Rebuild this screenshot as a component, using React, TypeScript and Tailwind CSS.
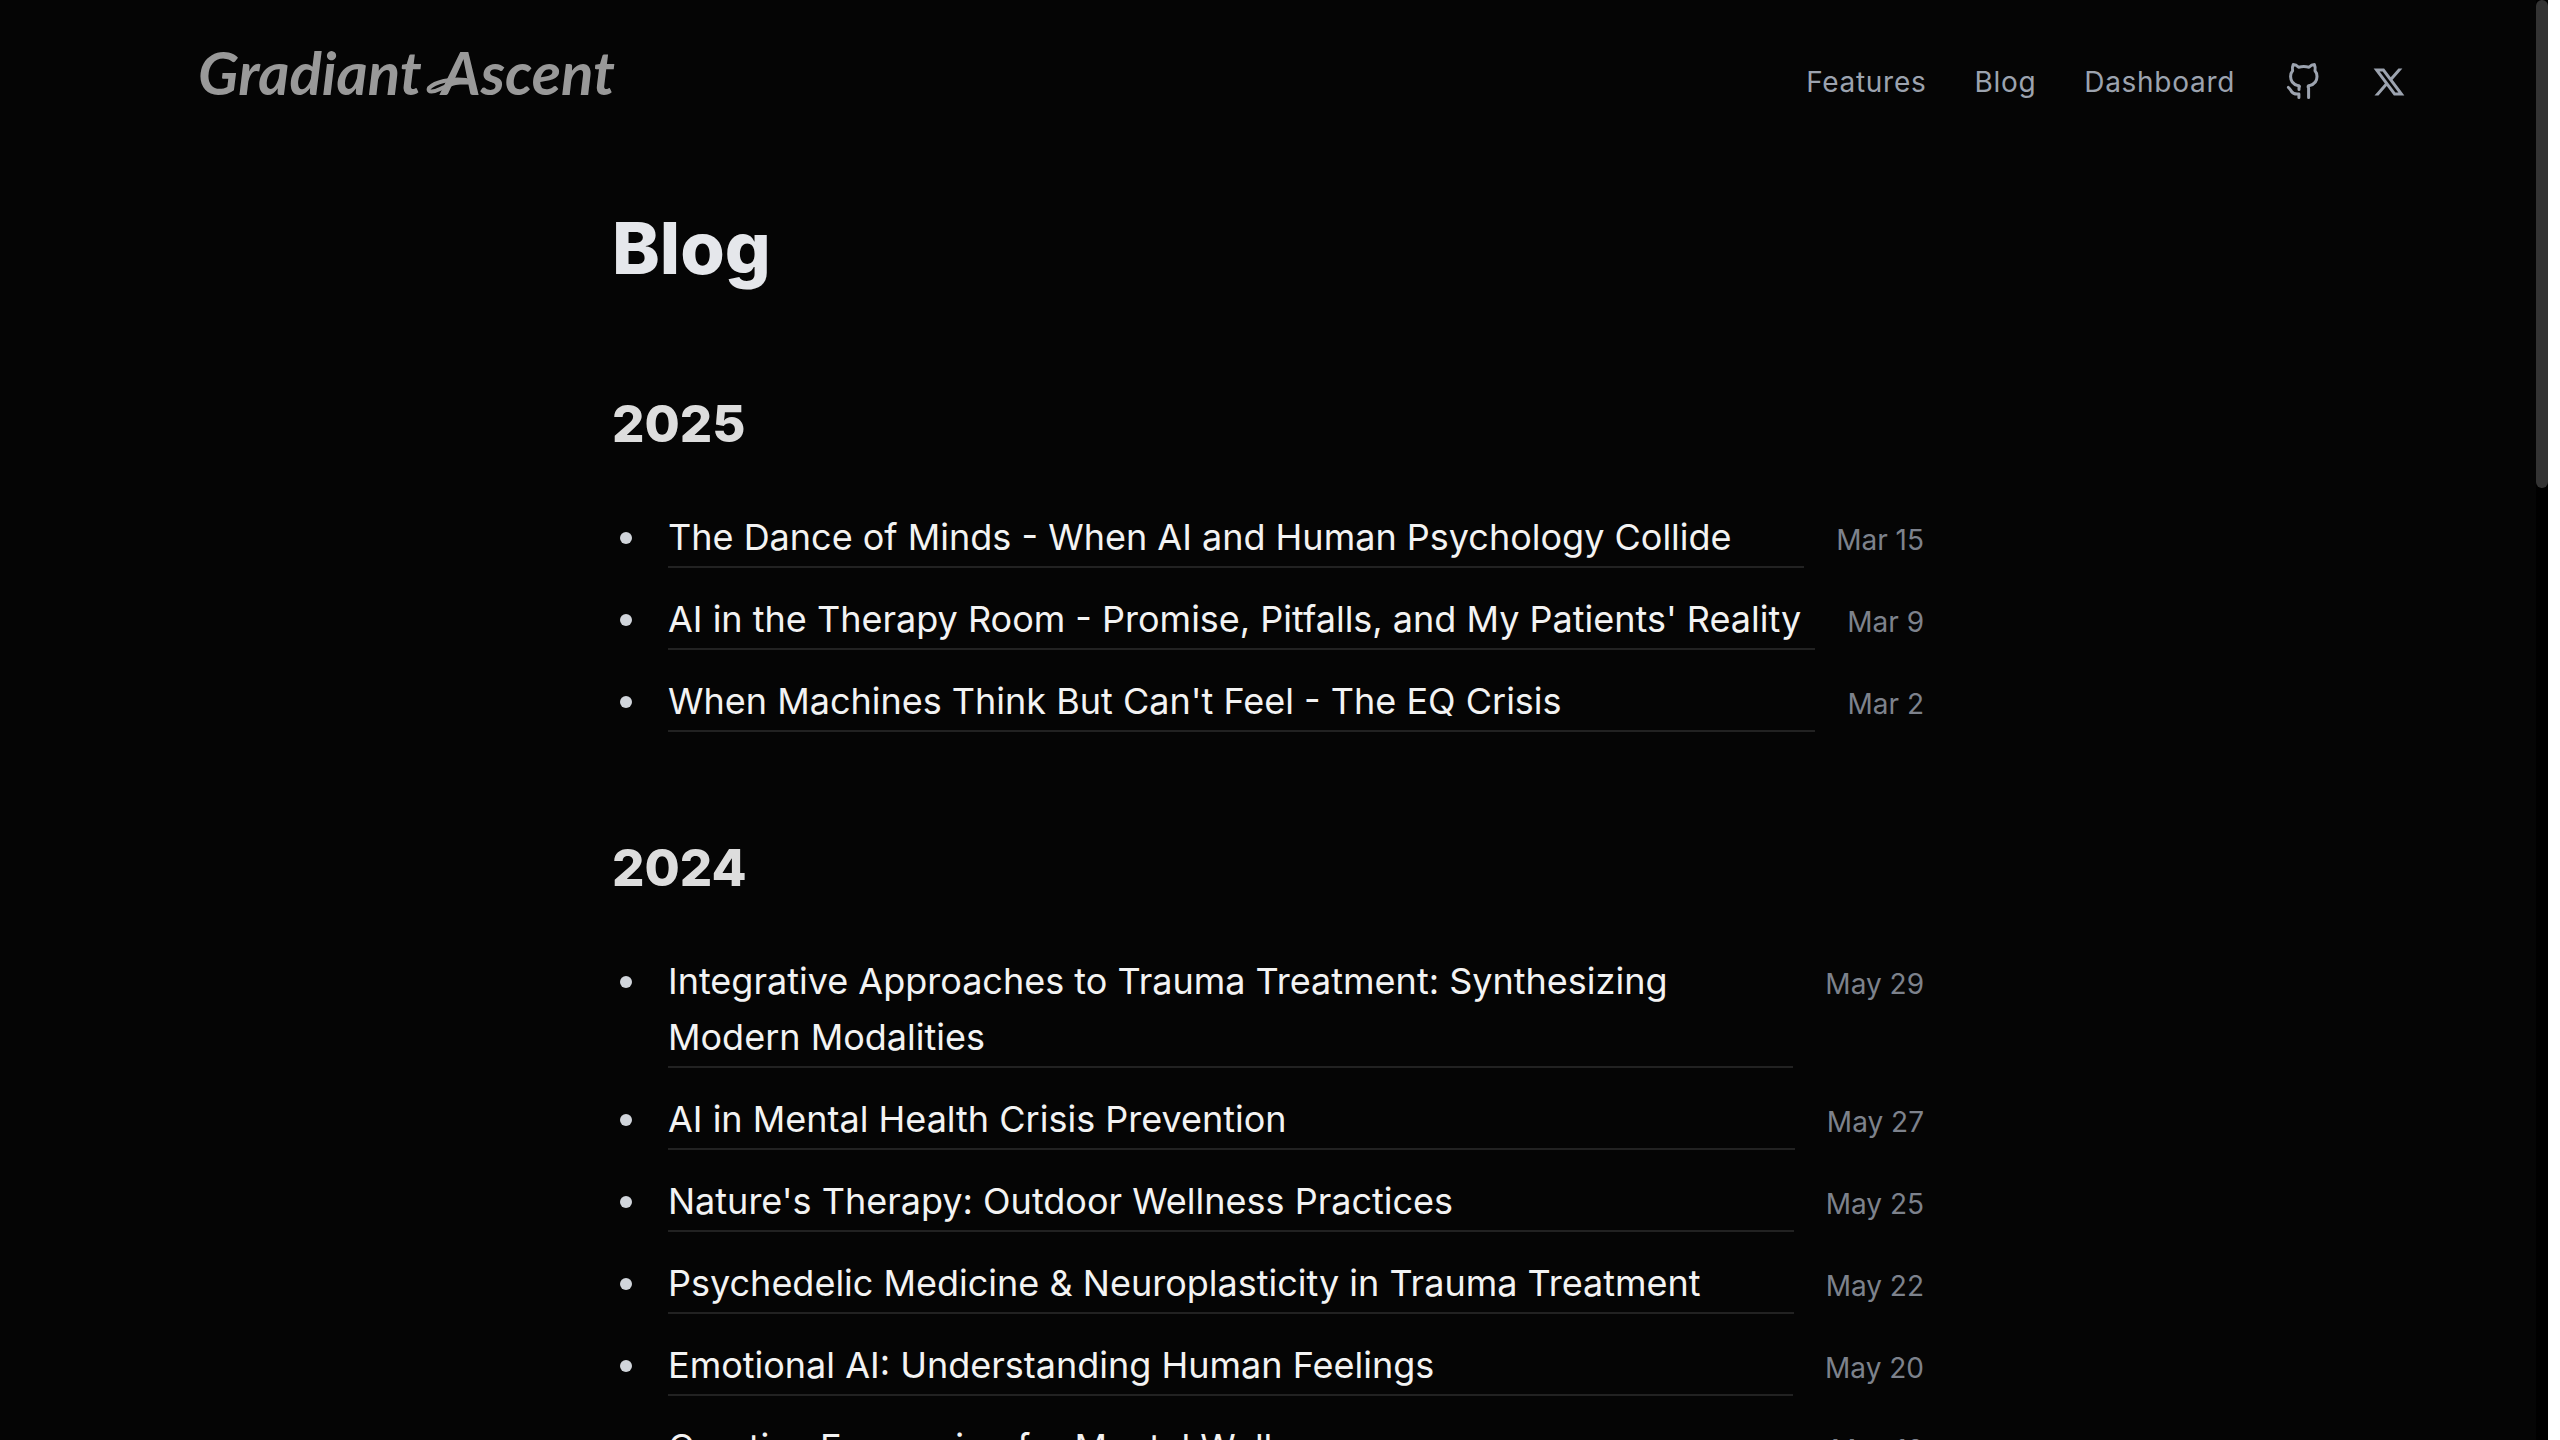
import { RiTwitterXLine } from "react-icons/ri";

type Post = { title: string; date: string };

const years: { year: string; posts: Post[] }[] = [
  {
    year: "2025",
    posts: [
      { title: "The Dance of Minds - When AI and Human Psychology Collide", date: "Mar 15" },
      { title: "AI in the Therapy Room - Promise, Pitfalls, and My Patients' Reality", date: "Mar 9" },
      { title: "When Machines Think But Can't Feel - The EQ Crisis", date: "Mar 2" },
    ],
  },
  {
    year: "2024",
    posts: [
      { title: "Integrative Approaches to Trauma Treatment: Synthesizing Modern Modalities", date: "May 29" },
      { title: "AI in Mental Health Crisis Prevention", date: "May 27" },
      { title: "Nature's Therapy: Outdoor Wellness Practices", date: "May 25" },
      { title: "Psychedelic Medicine & Neuroplasticity in Trauma Treatment", date: "May 22" },
      { title: "Emotional AI: Understanding Human Feelings", date: "May 20" },
      { title: "Creative Expression for Mental Wellness", date: "May 18" },
    ],
  },
];

function GithubIcon() {
  return (
    <svg
      width="40"
      height="42"
      viewBox="12 11 40 42"
      fill="none"
      stroke="currentColor"
      strokeWidth="3"
      strokeLinecap="round"
      strokeLinejoin="round"
      aria-hidden="true"
    >
      <path d="M28 39.5V37.5C29 36.5 28.5 35.8 27 35.6C22.5 34.5 19.6 31.5 19.6 26.5C19.6 24 20.3 22.3 21.6 20.8C21.2 18.5 21.3 16.5 22.2 14.6C24 14.6 25.8 15.4 27.6 17.2C31.2 16.4 34.4 16.4 38 17.2C39.8 15.4 41.6 14.6 43.4 14.6C44.3 16.5 44.4 18.5 44 20.8C45.3 22.3 46 24 46 26.5C46 31.5 43 34.5 38.5 35.6C37 35.8 36.6 36.5 37.6 38V47.5" />
      <path d="M17.4 37.4C19 38.4 19.6 40 20.6 41.6C22 43.8 24.5 44.3 27.9 43.9V47.5" />
    </svg>
  );
}

function Logo() {
  return (
    <a
      href="#home"
      className="relative flex items-center gap-5 pb-4 font-['Lato',sans-serif] text-[60px] leading-[72px] font-bold text-[#999999] italic"
    >
      <span>Gradiant</span>
      <span className="relative">
        Ascent
        <svg
          className="absolute top-10 -left-4"
          width="44"
          height="20"
          viewBox="0 0 44 20"
          fill="none"
          stroke="currentColor"
          strokeWidth="4"
          strokeLinecap="round"
          aria-hidden="true"
        >
          <path d="M40 4C24 2 9 6 3 12C1 17 8 16 14 13C22 9 30 6 40 5" />
        </svg>
      </span>
    </a>
  );
}

function Header() {
  return (
    <header className="flex h-40 items-center justify-between pr-[129px] pl-[198px]">
      <Logo />
      <nav className="flex items-center gap-12 pt-1 text-[28px] leading-10 tracking-wide text-[#9ca3af]">
        <a href="#features">Features</a>
        <a href="#blog">Blog</a>
        <a href="#dashboard">Dashboard</a>
        <a href="#github" aria-label="GitHub"><GithubIcon /></a>
        <a href="#x" aria-label="X"><RiTwitterXLine size={36} /></a>
      </nav>
    </header>
  );
}

function PostRow({ title, date }: Post) {
  return (
    <li className="flex items-start">
      <span className="mt-[23px] mr-[36px] ml-2 size-3 shrink-0 rounded-full bg-[#d1d5db]" />
      <a href="#post" className="mr-8 grow border-b-2 border-[#222222] pb-px text-[36px] leading-14 text-[#f3f3f3]">
        {title}
      </a>
      <time className="shrink-0 pt-[5px] text-[28px] leading-[52px] text-[#7d828c]">{date}</time>
    </li>
  );
}

export default function App() {
  return (
    <div className="flex h-screen overflow-hidden bg-white font-['Inter',sans-serif]">
      <div className="min-w-0 grow overflow-hidden bg-[#050505]">
        <Header />
        <main className="mx-auto max-w-[1312px] pt-12">
          <h1 className="text-[72px] leading-20 font-extrabold text-[#e5e7eb]">Blog</h1>
          {years.map((group) => (
            <section key={group.year} className="mt-25">
              <h2 className="text-[51px] leading-[72px] font-extrabold text-[#dddddd]">{group.year}</h2>
              <ul className="mt-[49px] flex flex-col gap-[23px]">
                {group.posts.map((post) => (
                  <PostRow key={post.title} {...post} />
                ))}
              </ul>
            </section>
          ))}
        </main>
      </div>
      <div className="w-3 shrink-0 bg-black">
        <div className="h-[488px] rounded-full bg-[#333333]" />
      </div>
      <div className="w-3 shrink-0" />
    </div>
  );
}
